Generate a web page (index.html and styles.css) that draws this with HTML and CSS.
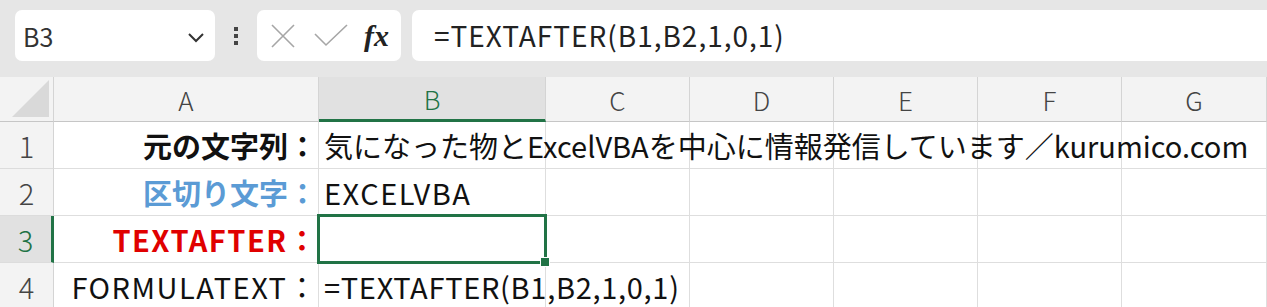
FILE: index.html
```html
<!DOCTYPE html>
<html lang="ja">
<head>
    <meta charset="UTF-8">
    <title>TEXTAFTER</title>
    <link rel="stylesheet" href="styles.css">
</head>
<body>
    <div class="toolbar">
        <div class="name-box">
            <span class="name-text">B3</span>
            <svg class="chevron" width="18" height="12" viewBox="0 0 18 12">
                <path d="M2 3 L9 10 L16 3" fill="none" stroke="#333" stroke-width="2"/>
            </svg>
        </div>
        <div class="grip">
            <span></span><span></span><span></span>
        </div>
        <div class="fx-box">
            <svg width="26" height="26" viewBox="0 0 26 26">
                <path d="M2 2 L24 24 M24 2 L2 24" fill="none" stroke="#a6a6a6" stroke-width="1.6"/>
            </svg>
            <svg width="34" height="24" viewBox="0 0 34 24">
                <path d="M1 10 L12 21 L33 1" fill="none" stroke="#a6a6a6" stroke-width="1.6"/>
            </svg>
            <span class="fx">fx</span>
        </div>
        <div class="formula-box">=TEXTAFTER(B1,B2,1,0,1)</div>
    </div>

    <div class="sheet">
        <div class="corner"><span class="triangle"></span></div>
        <div class="col-head">A</div>
        <div class="col-head active">B</div>
        <div class="col-head">C</div>
        <div class="col-head">D</div>
        <div class="col-head">E</div>
        <div class="col-head">F</div>
        <div class="col-head">G</div>

        <div class="row-head">1</div>
        <div class="cell label">元の文字列：</div>
        <div class="cell text overflow">気になった物とExcelVBAを中心に情報発信しています／kurumico.com</div>
        <div class="cell"></div>
        <div class="cell"></div>
        <div class="cell"></div>
        <div class="cell"></div>
        <div class="cell"></div>

        <div class="row-head">2</div>
        <div class="cell label blue">区切り文字：</div>
        <div class="cell text wide">EXCELVBA</div>
        <div class="cell"></div>
        <div class="cell"></div>
        <div class="cell"></div>
        <div class="cell"></div>
        <div class="cell"></div>

        <div class="row-head active">3</div>
        <div class="cell label red wide">TEXTAFTER：</div>
        <div class="cell selected"><span class="handle"></span></div>
        <div class="cell"></div>
        <div class="cell"></div>
        <div class="cell"></div>
        <div class="cell"></div>
        <div class="cell"></div>

        <div class="row-head">4</div>
        <div class="cell label plain wide">FORMULATEXT：</div>
        <div class="cell text overflow formula">=TEXTAFTER(B1,B2,1,0,1)</div>
        <div class="cell"></div>
        <div class="cell"></div>
        <div class="cell"></div>
        <div class="cell"></div>
        <div class="cell"></div>
    </div>
</body>
</html>
```

FILE: styles.css
```css
body {
    margin: 0;
    width: 1267px;
    height: 307px;
    overflow: hidden;
    background-color: #e6e6e6;
    font-family: "Noto Sans CJK JP", "Noto Sans", sans-serif;
    color: #111;
}
.toolbar {
    height: 77px;
    display: flex;
    align-items: flex-start;
    padding: 10px 0 0 15px;
    box-sizing: border-box;
}
.name-box {
    width: 200px;
    height: 51px;
    background-color: white;
    border-radius: 7px;
    display: flex;
    align-items: center;
    justify-content: space-between;
    padding: 0 10px 0 8px;
    box-sizing: border-box;
}
.name-text {
    font-size: 25px;
    color: #333;
}
.chevron {
    margin-top: 2px;
}
.grip {
    width: 42px;
    height: 51px;
    display: flex;
    flex-direction: column;
    align-items: center;
    justify-content: center;
    gap: 3px;
}
.grip span {
    width: 4px;
    height: 4px;
    background-color: #444;
}
.fx-box {
    width: 144px;
    height: 51px;
    background-color: white;
    border-radius: 7px;
    display: flex;
    align-items: center;
    padding: 0 10px 0 13px;
    box-sizing: border-box;
    gap: 18px;
}
.fx {
    font-family: "Liberation Serif", serif;
    font-style: italic;
    font-weight: 700;
    font-size: 30px;
    color: #222;
    margin-left: -2px;
}
.formula-box {
    flex: 1;
    height: 51px;
    margin-left: 11px;
    margin-right: -10px;
    background-color: white;
    border-radius: 7px;
    padding-left: 22px;
    font-size: 28px;
    letter-spacing: 1px;
    line-height: 50px;
    color: #222;
}
.sheet {
    display: grid;
    grid-template-columns: 54px 265px 227px 144px 144px 144px 144px 145px;
    grid-template-rows: 45px 47px 47px 47px 47px;
    background-color: white;
}
.corner, .col-head, .row-head {
    background-color: #f3f3f3;
    box-sizing: border-box;
    border-right: 1px solid #d4d4d4;
    border-bottom: 1px solid #c6c6c6;
}
.corner {
    position: relative;
}
.triangle {
    position: absolute;
    right: 4px;
    bottom: 4px;
    width: 0;
    height: 0;
    border-left: 37px solid transparent;
    border-bottom: 37px solid #d9d9d9;
}
.col-head {
    font-size: 26px;
    font-weight: 300;
    color: #444;
    display: flex;
    align-items: center;
    justify-content: center;
}
.col-head.active {
    background-color: #e1e1e1;
    color: #217346;
    border-bottom: 3px solid #217346;
}
.row-head {
    font-size: 29px;
    font-weight: 300;
    color: #444;
    display: flex;
    align-items: center;
    justify-content: center;
    border-bottom-color: #dcdcdc;
}
.row-head.active {
    background-color: #e1e1e1;
    color: #217346;
    border-right: 3px solid #217346;
}
.cell {
    box-sizing: border-box;
    border-right: 1px solid #dedede;
    border-bottom: 1px solid #dedede;
    font-size: 29px;
    display: flex;
    align-items: center;
    white-space: nowrap;
    position: relative;
}
.cell.label {
    justify-content: flex-end;
    font-weight: 700;
    padding-right: 1px;
}
.cell.label.plain {
    font-weight: 400;
}
.cell.wide {
    letter-spacing: 1.5px;
}
.cell.label.wide {
    padding-right: 0;
}
.cell.formula {
    letter-spacing: 0.7px;
}
.cell.blue {
    color: #5b9bd5;
}
.cell.red {
    color: #e00000;
}
.cell.text {
    padding-left: 5px;
}
.cell.overflow {
    overflow: visible;
    z-index: 1;
}
.cell.selected {
    border: 3px solid #217346;
    margin: -2px 0 0 -2px;
    width: calc(100% + 3px);
    height: calc(100% + 3px);
    z-index: 2;
}
.handle {
    position: absolute;
    right: -6px;
    bottom: -6px;
    width: 8px;
    height: 8px;
    background-color: #217346;
    border: 1px solid white;
}
```
